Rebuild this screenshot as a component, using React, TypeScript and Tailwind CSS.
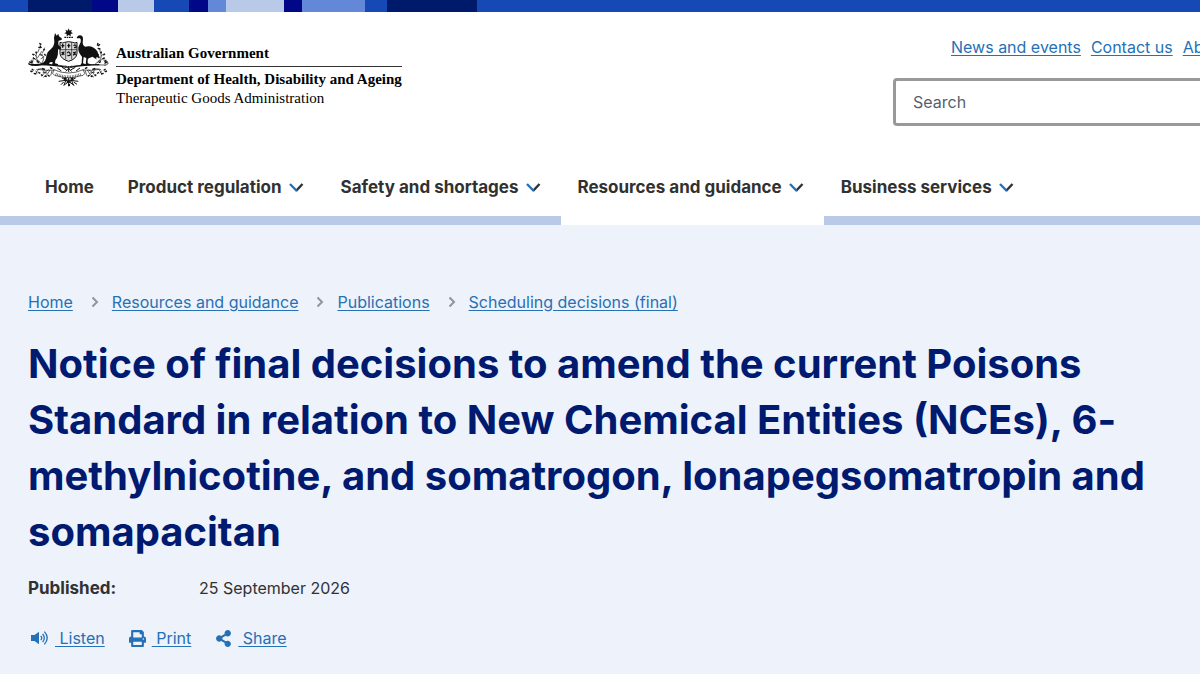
import { FaPrint, FaShareAlt } from "react-icons/fa";

const stripes = [
  { width: 28, color: "bg-[#1749b6]" },
  { width: 64, color: "bg-[#001a6b]" },
  { width: 26, color: "bg-[#000887]" },
  { width: 36, color: "bg-[#b9cae8]" },
  { width: 35, color: "bg-[#1749b6]" },
  { width: 19, color: "bg-[#000887]" },
  { width: 18, color: "bg-[#6388d8]" },
  { width: 58, color: "bg-[#b9cae8]" },
  { width: 18, color: "bg-[#000887]" },
  { width: 63, color: "bg-[#6388d8]" },
  { width: 22, color: "bg-[#1749b6]" },
  { width: 90, color: "bg-[#001a6b]" },
];

const navItems = [
  { label: "Product regulation", active: false },
  { label: "Safety and shortages", active: false },
  { label: "Resources and guidance", active: true },
  { label: "Business services", active: false },
];

const crumbs = ["Home", "Resources and guidance", "Publications", "Scheduling decisions (final)"];

function Crest() {
  return (
    <svg className="h-[60px] w-[82px] shrink-0" viewBox="24 26 246 180" fill="none" stroke="#111" aria-hidden="true">
      {/* star and wreath */}
      <path
        d="M146 27l3 7 7-3-3 7 6 4-7 2 0 7-6-4-6 4 0-7-7-2 6-4-3-7 7 3z"
        fill="#111"
        stroke="none"
      />
      <path d="M133 54h26" strokeWidth="4" strokeDasharray="5 2" />
      {/* shield */}
      <path d="M120 69q8 4 14 0q12-4 24 0q7 4 13 0v34q-2 16-25 23q-24-7-26-23z" strokeWidth="3" fill="#ddd" />
      <path d="M120 91h51M137 69v51M155 69v51" strokeWidth="2" />
      <path
        d="M124 79h9M128 74v11M142 79h9M146 73v12M161 80q4-7 7 0t-6 4M125 98l8 8M133 97l-8 10M142 102q4-9 8 0t-8 6M160 98l7 9M167 97l-7 11"
        strokeWidth="4"
      />
      {/* kangaroo */}
      <path
        d="M105 41L110 49L115 43L117 51L124 56Q127 60 124 62L116 64Q114 71 116 78L124 85L121 91L114 90Q115 105 111 115L106 123L105 132L114 134V138H96L98 128L90 129L87 133L94 135V138H66Q45 142 28 137L22 132Q50 136 68 131Q78 125 79 111Q81 98 92 90Q102 82 103 68L102 55Z"
        fill="#111"
        stroke="none"
      />
      {/* emu */}
      <path
        d="M170 57Q172 48 180 48Q189 49 189 58L188 71Q188 79 195 82Q209 78 221 85Q236 94 238 118L231 113L226 118L218 112L206 117L203 121L203 132L212 135V138H197L199 116L191 113L189 132L197 135V138H181L185 131L186 112Q173 99 175 84Q179 74 182 69Q184 60 180 57Z"
        fill="#111"
        stroke="none"
      />
      {/* scroll under the supporters */}
      <path d="M34 137q62-4 112 5 55-9 111-5M101 151q45 20 89 0M99 163q5 8 13 7 34 11 67 0 12 0 15-7M101 151l-3 12M190 151l4 12" strokeWidth="2" />
      <path d="M107 164q39 16 77 0" strokeWidth="8" strokeDasharray="2 3" opacity="0.75" />
      <path d="M62 135q35 1 78 9M151 144q40-8 87-8" strokeWidth="4" />
      {/* wattle, left */}
      <path
        d="M66 133q-18-8-18-25M59 126q-12-1-20-13M49 111l-8-8M52 116l8-12M66 131q7-8 3-21M62 119l11-8M42 122l-10 1M48 96l1 12M58 88l-5 12M65 96l-6 10M74 85l-7 17M40 132q-11-3-14-1 1 6 13 7"
        strokeWidth="2"
      />
      <path
        d="M47 98l4 4M58 72l6 4M55 84l7 1M60 79l4 7M70 90l5 2M37 104l5 4M28 127l8 4M61 106l7 2M73 104l4 5M38 116l8 3M34 125l5 4M50 126l7 4"
        strokeWidth="4"
      />
      <path
        d="M104 152q-29 3-50-2M86 151q-14 8-21 20M75 152q-13-7-26-1M90 152q-7 16-20 22M55 151l-9 13M42 151l-7 8M47 154l5 8M68 154l10 8M82 161l-14-2M96 154l-4 15"
        strokeWidth="2"
      />
      <path d="M31 155l6 2M41 162l8 2M55 159l6 3M63 166l5 3M74 170l6 2M66 147l9 3M83 167l6 4M35 149l5 3M90 144l7 4" strokeWidth="4" />
      {/* wattle, right */}
      <path
        d="M226 133q18-8 18-25M233 126q12-1 20-13M243 111l8-8M240 116l-8-12M230 119l-11-8M250 122l10 1M244 96l-1 12M239 88l2 12M229 99l8 8M252 132q11-3 13-1-1 6-12 7"
        strokeWidth="2"
      />
      <path
        d="M245 98l-4 4M234 71l-2 8M240 75l-6 5M233 87l8 2M226 94l5 4M255 103l-5 5M263 127l-8 4M231 106l-5 3M255 116l-8 3M259 124l-6 3M243 127l-7 3"
        strokeWidth="4"
      />
      <path
        d="M188 152q29 3 50-2M206 151q14 8 21 20M217 152q13-7 26-1M202 152q7 16 20 22M237 151l9 13M250 151l7 8M245 154l-5 8M224 154l-10 8M210 161l14-2M196 154l4 15"
        strokeWidth="2"
      />
      <path d="M261 155l-6 2M251 162l-8 2M237 159l-6 3M229 166l-5 3M218 170l-6 2M226 147l-9 3M209 167l-6 4M257 149l-5 3M202 144l-7 4" strokeWidth="4" />
      <path d="M146 140v18M137 140l18 16M155 140l-18 16M126 144l14 8M166 144l-14 8M112 146l12 9M180 146l-12 9" strokeWidth="3" />
      {/* bottom sprigs */}
      <path
        d="M126 176q17 8 37 22M167 176q-19 8-36 22M116 186q27-8 59 0M131 188l-8 8M161 188l10 7M146 176v25M138 181l-6 17M154 181l6 17"
        strokeWidth="3"
      />
      <path d="M140 187h12M144 197h6M132 178h8M152 178h8" strokeWidth="6" />
    </svg>
  );
}

function NavChevron() {
  return (
    <svg className="h-4 w-5" viewBox="0 0 20 16" fill="none" strokeWidth="2.400" aria-hidden="true">
      <path d="M9 12l6.500-7" stroke="#313131" />
      <path d="M3 5l6.800 7" stroke="#2670b5" />
    </svg>
  );
}

function ListenIcon() {
  return (
    <svg className="h-[18px] w-[18px]" viewBox="0 0 18 18" fill="none" stroke="currentColor" strokeWidth="1.300" aria-hidden="true">
      <path d="M0 6h3.500L8 2.700v12.600L3.500 12H0z" fill="currentColor" stroke="none" />
      <path d="M9.800 6.800q1.800 2.200 0 4.400M11.600 4.800q3.400 4.200 0 8.400M13.400 2.600q5.600 6.400 0 12.800" />
    </svg>
  );
}

export default function App() {
  return (
    <div className="min-h-screen w-full overflow-x-hidden bg-[#edf2fb] font-[Inter,'Liberation_Sans',sans-serif] text-base leading-6 text-[#313131]">
      <div className="flex h-3 bg-[#1749b6]">
        {stripes.map((stripe, i) => (
          <div key={i} className={stripe.color} style={{ width: stripe.width }} />
        ))}
      </div>

      <header className="overflow-hidden bg-white">
        <div className="flex min-w-[1272px] justify-between px-7 pt-4">
          <a href="#" className="flex gap-1.5 text-black">
            <Crest />
            <div className="pt-[15px] font-['Liberation_Serif',serif] text-[15px] leading-5">
              <div className="border-b border-[#333] pb-[3px] font-bold">Australian Government</div>
              <div className="pt-0.5 font-bold">Department of Health, Disability and Ageing</div>
              <div className="leading-[18px]">Therapeutic Goods Administration</div>
            </div>
          </a>
          <div className="w-[351px] pt-[7px]">
            <nav className="flex gap-2.5 pl-[58px] whitespace-nowrap text-[#2670b5]" aria-label="Utility">
              <a href="#" className="underline underline-offset-2">News and events</a>
              <a href="#" className="underline underline-offset-2">Contact us</a>
              <a href="#" className="underline underline-offset-2">About</a>
            </nav>
            <input
              type="search"
              aria-label="Search"
              placeholder="Search"
              className="mt-[19px] h-12 w-full rounded-sm border-3 border-[#999] px-[17px] placeholder:text-[#546170]"
            />
          </div>
        </div>

        <nav className="mt-8 flex text-[17px] font-bold whitespace-nowrap" aria-label="Main">
          <div className="w-7 border-b-9 border-[#b9cae8]" />
          <a href="#" className="border-b-9 border-[#b9cae8] px-[17px] py-[17px]">Home</a>
          {navItems.map((item) => (
            <button
              key={item.label}
              className={`flex items-center gap-[5px] border-b-9 px-[17px] ${item.active ? "border-white" : "border-[#b9cae8]"}`}
            >
              {item.label}
              <NavChevron />
            </button>
          ))}
          <div className="grow border-b-9 border-[#b9cae8]" />
        </nav>
      </header>

      <main className="px-7 pt-[65px] pb-6">
        <nav className="flex items-center text-[#2670b5]" aria-label="Breadcrumb">
          {crumbs.map((crumb, i) => (
            <div key={crumb} className="flex items-center">
              {i > 0 && (
                <svg className="mr-[13px] ml-[18px] h-3 w-2" viewBox="0 0 8 12" fill="none" stroke="#949494" strokeWidth="2" aria-hidden="true">
                  <path d="M1.500 1.500L6 6l-4.500 4.500" />
                </svg>
              )}
              <a href="#" className="underline underline-offset-2">{crumb}</a>
            </div>
          ))}
        </nav>

        <h1 className="mt-[22px] text-[40px] leading-14 font-bold text-[#001a70]">
          Notice of final decisions to amend the current Poisons Standard in relation to New Chemical Entities (NCEs), 6-methylnicotine, and somatrogon, lonapegsomatropin and somapacitan
        </h1>

        <dl className="mt-4 flex">
          <dt className="w-[171px] text-[17px] font-bold">Published:</dt>
          <dd>25 September 2026</dd>
        </dl>

        <div className="mt-[26px] flex gap-6 text-[#2670b5]">
          <button className="flex items-center gap-1.5 pl-[3px]">
            <ListenIcon />
            <span className="whitespace-pre underline underline-offset-2"> Listen</span>
          </button>
          <button className="flex items-center gap-1.5">
            <FaPrint className="h-[17px] w-[17px]" />
            <span className="whitespace-pre underline underline-offset-2"> Print</span>
          </button>
          <button className="flex items-center gap-1.5">
            <FaShareAlt className="h-[17px] w-[17px]" />
            <span className="whitespace-pre underline underline-offset-2"> Share</span>
          </button>
        </div>
      </main>
    </div>
  );
}
